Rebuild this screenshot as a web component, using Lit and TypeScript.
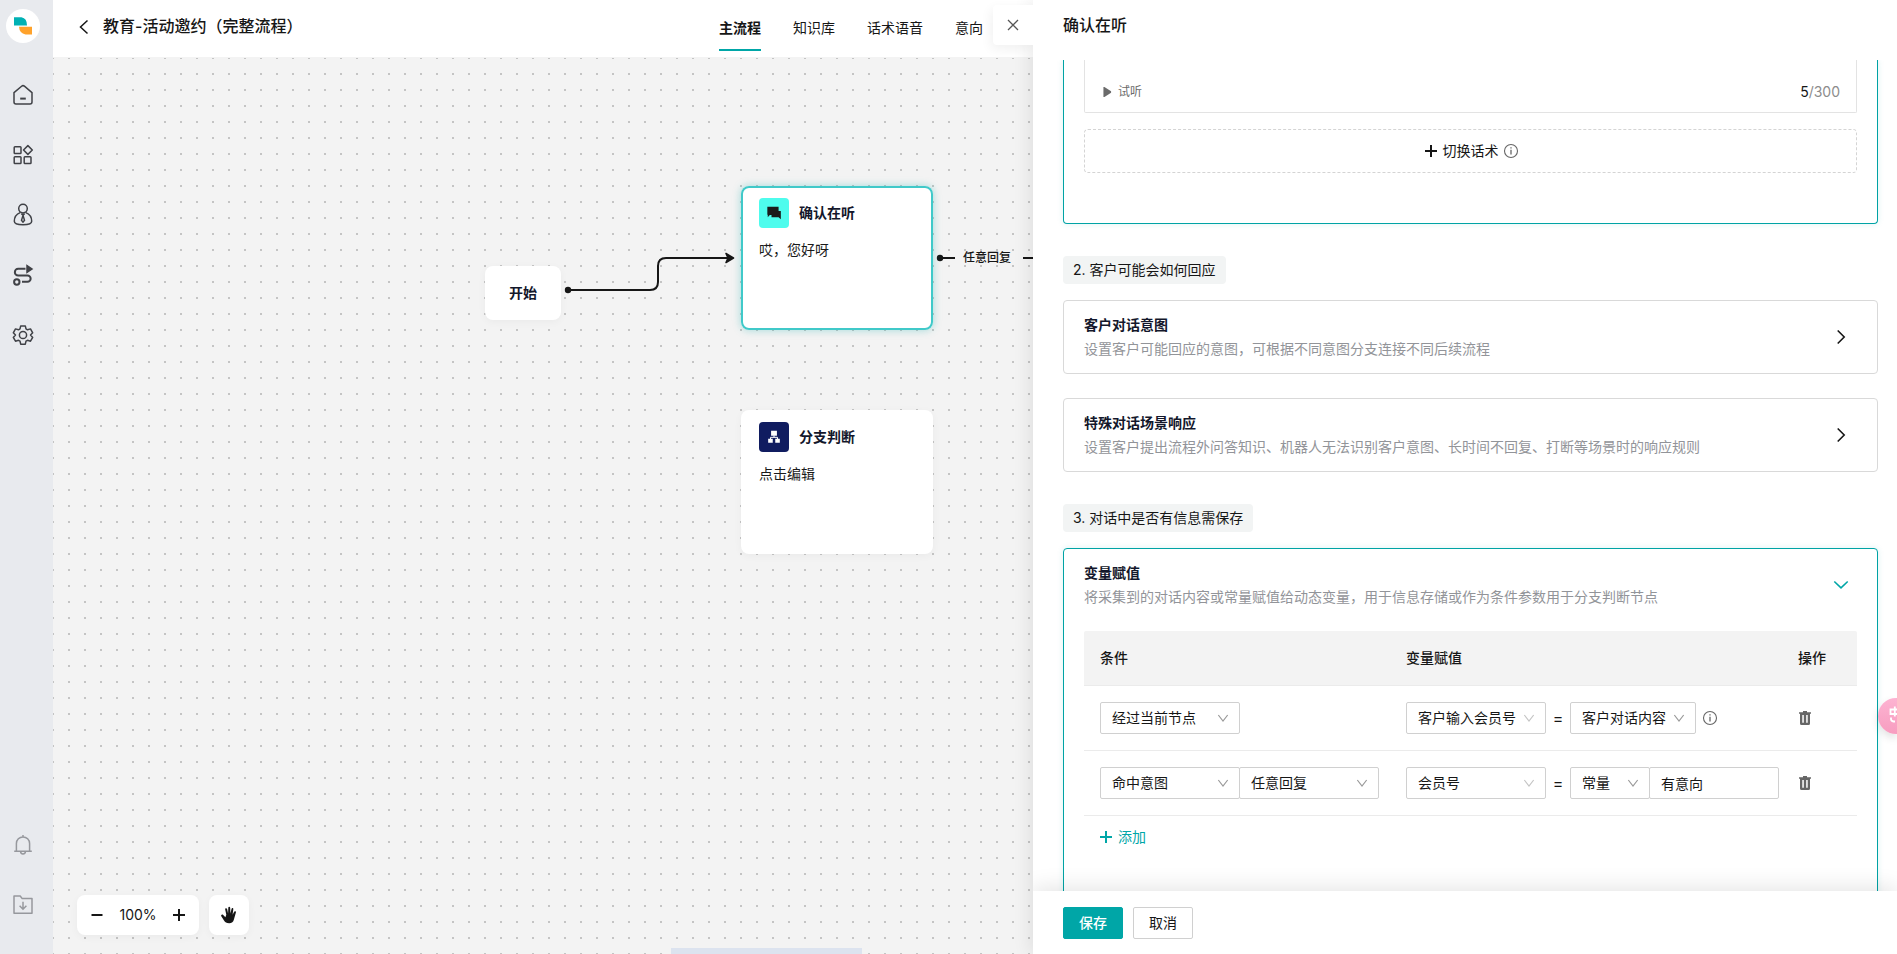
import { LitElement, html, css, svg, nothing } from "lit";
import { customElement, property } from "lit/decorators.js";

const icons: Record<string, unknown> = {
  home: svg`<path d="M3 9.600 10.600 3.200a2.200 2.200 0 0 1 2.800 0L21 9.600V19a2 2 0 0 1-2 2H5a2 2 0 0 1-2-2Z"/><path d="M9.200 15.600h5.600" stroke-width="2"/>`,
  apps: svg`<rect x="3.200" y="3.800" width="6.800" height="6.800" rx=".8"/><rect x="3.200" y="13.800" width="6.800" height="6.800" rx=".8"/><rect x="13.200" y="13.800" width="6.800" height="6.800" rx=".8"/><path d="m16.900 2.600 4.400 4.400-4.400 4.400-4.400-4.400Z" stroke-linejoin="round"/>`,
  person: svg`<circle cx="12" cy="5.600" r="4.300"/><path d="M9.200 9.600C5.600 11 3.300 14.500 3.300 18.300c0 2.700 3.700 3.500 8.700 3.500s8.700-.8 8.700-3.500c0-3.800-2.300-7.300-5.900-8.700"/><path d="m10.400 10.600 1.600 1.600 1.600-1.600M12 12.400l-1.500 5 1.500 1.700 1.500-1.700Z"/>`,
  route: svg`<circle cx="5.800" cy="19" r="2.700" stroke-width="2"/><path d="M14.500 5.800H7.200a3.200 3.200 0 0 0 0 6.700h9.300a3.100 3.100 0 0 1 0 6.300H11" stroke-width="2"/><path d="m16 2.600 5 3.400-5 3.400Z" fill="currentColor"/>`,
  gear: svg`<path d="M9.700 2.900h4.600l.7 3 1.500.9 3-.9 2.200 3.900-2.200 2.200 2.200 2.400-2.200 3.800-3-.9-1.500.9-.7 3H9.700l-.7-3-1.500-.9-3 .9-2.200-3.800L4.500 12 2.300 9.800l2.200-3.900 3 .9L9 5.900Z" stroke-linejoin="round"/><circle cx="12" cy="12" r="3.600"/>`,
  bell: svg`<path d="M5.400 18V10.500a6.600 6.600 0 0 1 13.200 0V18M3.200 18.200h17.600M12 2v2M9.600 18.500a2.400 2.400 0 0 0 4.800 0"/>`,
  folder: svg`<path d="M3 3h6.200l2 2.600H21V20.300H3Z" stroke-linejoin="round"/><path d="M12 8.800v7M8.600 12.800 12 16.200l3.400-3.400"/>`,
  back: svg`<path d="M15.500 5.500 8.500 12l7 6.500" stroke-width="1.500"/>`,
  close: svg`<path d="m7 7 10 10M17 7 7 17" stroke-width="1.300"/>`,
  right: svg`<path d="m8.700 5.500 6.500 6.500-6.500 6.500" stroke-width="1.600"/>`,
  down: svg`<path d="m5.300 8.500 6.700 6.300 6.700-6.300" stroke-width="1.600"/>`,
  caret: svg`<path d="m5 7.500 7 9 7-9" stroke-width="1.800"/>`,
  plus: svg`<path d="M12 6v12M6 12h12" stroke-width="2"/>`,
  minus: svg`<path d="M6.500 12h11" stroke-width="2"/>`,
  info: svg`<circle cx="12" cy="12" r="6.500" stroke-width="1.100"/><path d="M12 10.800v4.700M12 8.300v1.300" stroke-width="1.300"/>`,
  play: svg`<path d="M6.500 6v12h1.200l8-5v-2l-8-5Z" fill="currentColor" stroke="none"/>`,
  trash: svg`<path fill="currentColor" stroke="none" fill-rule="evenodd" d="M10 5h4v1.200h4v1.600h-1V17.500a1.500 1.500 0 0 1-1.500 1.500h-7A1.500 1.500 0 0 1 7 17.500V7.800H6V6.200h4ZM9.300 9v7.800h1.500V9Zm3.900 0v7.800h1.500V9Z"/>`,
  chat: svg`<path fill="currentColor" stroke="none" d="M4 4.500h13.500v5h2.700V19.500l-2.700-2.300H9V14.500H7L4.500 17V14H4Z"/>`,
  branch: svg`<path fill="currentColor" stroke="none" d="M8.500 4.500h7v6h-7ZM5 14h5.500v5H5ZM13.500 14H19v5h-5.500Z"/><path d="M7.800 15v-2.600h8.400V15M12 10v2.400" stroke-width="1.200"/>`,
  hand: svg`<path fill="currentColor" stroke="none" d="M9.300 11.800 8.200 6.500c-.3-1.500 1.500-1.900 1.900-.5l1 4.600.2-5.800c0-1.300 1.800-1.300 1.900 0l.2 5.800 1.100-4.700c.4-1.300 2-1 1.800.4l-.7 5.500 1.500-3c.6-1.200 2.200-.6 1.800.7l-2 7c-.7 2.500-2 3.700-4.700 3.700-2.800 0-4-1-5.200-2.800l-2.700-4.200c-.7-1.200.9-2.200 1.900-1.200l2.200 2.200Z"/>`,
};

@customElement("ui-icon")
class UiIcon extends LitElement {
  @property() name = "";
  static styles = css`
    :host { display: inline-flex; width: 24px; height: 24px; flex: none; }
    svg { width: 100%; height: 100%; fill: none; stroke: currentColor; stroke-width: 1.500; }
  `;
  render() {
    return html`<svg viewBox="0 0 24 24" aria-hidden="true">${icons[this.name]}</svg>`;
  }
}

const controls = css`
  * { box-sizing: border-box; }
  button, select, input { font: inherit; color: inherit; margin: 0; }
  button { background: none; border: 0; padding: 0; cursor: pointer; }
  h1, h2, h3, p { margin: 0; font-size: inherit; }
  a { color: inherit; text-decoration: none; }
`;

@customElement("app-sidebar")
class AppSidebar extends LitElement {
  static styles = [controls, css`
    :host { display: flex; flex-direction: column; align-items: center; width: 53px; flex: none;
      padding: 9px 7px 37px 0; background: #e8eaee; color: #404247; }
    .logo { width: 34px; height: 34px; border-radius: 50%; background: #fff; margin-bottom: 40px; }
    nav { display: flex; flex-direction: column; gap: 36px; }
    nav a { display: flex; }
    .bottom { margin-top: auto; color: #96989d; }
  `];
  render() {
    const link = (name: string, label: string) =>
      html`<a href="#${name}" aria-label=${label}><ui-icon name=${name}></ui-icon></a>`;
    return html`
      <svg class="logo" viewBox="0 0 34 34" aria-hidden="true">
        <path d="M8 8.300h7.500q5.500 1 5.500 8.200H8Z" fill="#00b1b4"/>
        <path d="M13 17.800h13v7.700h-6.500q-6-1-6.500-7.700Z" fill="#ffa22b"/>
      </svg>
      <nav>
        ${link("home", "首页")}${link("apps", "应用")}${link("person", "客户")}${link("route", "流程")}${link("gear", "设置")}
      </nav>
      <nav class="bottom">${link("bell", "通知")}${link("folder", "下载")}</nav>`;
  }
}

@customElement("flow-canvas")
class FlowCanvas extends LitElement {
  static styles = [controls, css`
    :host { display: block; position: relative; flex: 1; overflow: hidden; border-top: 1px solid #f3f3f3;
      background: #f3f3f3; }
    .grid { position: absolute; inset: 0; width: 100%; height: 100%; }
    .node { position: absolute; width: 192px; height: 144px; padding: 12px 18px; border-radius: 8px;
      background: #fff; box-shadow: 0 2px 8px rgba(0, 0, 0, 0.04); color: #1a1a1a; }
    .node.selected { box-shadow: inset 0 0 0 2px #40c9c9, 0 0 8px rgba(0, 166, 167, 0.35); }
    .node.start { width: 76px; height: 54px; padding: 0; display: grid; place-items: center;
      font-weight: 600; color: #13172b; }
    .head { display: flex; align-items: center; gap: 10px; }
    .head h2 { color: #13172b; font-weight: 600; }
    .tile { display: grid; place-items: center; width: 30px; height: 30px; border-radius: 4px; background: #4efced; }
    .tile.dark { background: #101c60; color: #fff; }
    .tile ui-icon { width: 20px; height: 20px; }
    .node p { margin-top: 11px; line-height: 22px; }
    .edge-label { position: absolute; font-size: 12px; line-height: 20px; font-weight: 500; }
    .tools { position: absolute; left: 24px; bottom: 19px; display: flex; gap: 10px; }
    .tools > * { display: flex; align-items: center; justify-content: center; height: 40px; border-radius: 8px;
      background: #fff; box-shadow: 0 2px 8px rgba(0, 0, 0, 0.04); }
    .zoom { width: 122px; gap: 10px; }
    .zoom button { display: flex; }
    .zoom output { width: 38px; text-align: center; }
    .hand { width: 40px; }
    .scroll { position: absolute; left: 618px; bottom: 0; width: 191px; height: 6px; background: #dce3ef; }
  `];
  render() {
    const nodes = [
      { x: 688, y: 128, icon: "chat", title: "确认在听", text: "哎，您好呀", selected: true },
      { x: 688, y: 352, icon: "branch", title: "分支判断", text: "点击编辑", selected: false },
    ];
    return html`
      <svg class="grid" aria-hidden="true">
        <defs><pattern id="dots" x="-1" y="-1" width="16" height="16" patternUnits="userSpaceOnUse">
          <rect width="2" height="2" fill="#c4c4c4"/></pattern></defs>
        <rect width="100%" height="100%" fill="url(#dots)"/>
        <g fill="none" stroke="#161616" stroke-width="2">
          <path d="M515 232h82q8 0 8-8v-16q0-8 8-8h64"/>
          <path d="M888 200h14M970 200h40"/>
        </g>
        <g fill="#161616">
          <circle cx="515" cy="232" r="3.200"/><circle cx="887" cy="200" r="3.200"/>
          <path d="m673 195.500 7.500 4.500-7.500 4.500 2-4.500Z" stroke="#161616" stroke-width="1.500" stroke-linejoin="round"/>
        </g>
      </svg>
      <div class="node start" style="left:432px;top:208px">开始</div>
      ${nodes.map((n) => html`
        <article class="node ${n.selected ? "selected" : ""}" style="left:${n.x}px;top:${n.y}px">
          <div class="head">
            <span class="tile ${n.selected ? "" : "dark"}"><ui-icon name=${n.icon}></ui-icon></span>
            <h2>${n.title}</h2>
          </div>
          <p>${n.text}</p>
        </article>`)}
      <span class="edge-label" style="left:910px;top:190px">任意回复</span>
      <div class="tools">
        <div class="zoom">
          <button aria-label="缩小"><ui-icon name="minus"></ui-icon></button>
          <output>100%</output>
          <button aria-label="放大"><ui-icon name="plus"></ui-icon></button>
        </div>
        <button class="hand" aria-label="拖动画布"><ui-icon name="hand"></ui-icon></button>
      </div>
      <div class="scroll"></div>`;
  }
}

@customElement("config-card")
class ConfigCard extends LitElement {
  @property() heading = "";
  @property() note = "";
  @property({ type: Boolean, reflect: true }) open = false;
  static styles = [controls, css`
    :host { display: block; border: 1px solid #d9d9d9; border-radius: 4px; background: #fff; }
    :host([open]) { border-color: #00a3a5; box-shadow: 0 0 6px rgba(0, 166, 167, 0.14); padding-bottom: 90px; }
    .toggle { display: flex; align-items: center; justify-content: space-between; width: 100%;
      padding: 12px 24px 12px 20px; text-align: left; line-height: 24px; }
    .title { display: block; color: #13172b; font-weight: 600; }
    .note { display: block; color: #929499; }
    :host([open]) ui-icon { color: #00a6a7; }
  `];
  render() {
    return html`
      <button class="toggle" aria-expanded=${this.open}>
        <span><span class="title">${this.heading}</span><span class="note">${this.note}</span></span>
        <ui-icon name=${this.open ? "down" : "right"}></ui-icon>
      </button>
      ${this.open ? html`<slot></slot>` : nothing}`;
  }
}

@customElement("config-drawer")
class ConfigDrawer extends LitElement {
  static styles = [controls, css`
    :host { display: flex; flex-direction: column; position: relative; width: 864px; flex: none;
      background: #fff; box-shadow: -4px 0 16px rgba(0, 0, 0, 0.08); }
    .close { position: absolute; right: 100%; top: 5px; width: 40px; height: 40px; display: grid; place-items: center;
      background: #fff; border-radius: 4px 0 0 4px; box-shadow: -2px 4px 12px rgba(0, 0, 0, 0.06);
      color: #555; clip-path: inset(-20px 0 -20px -20px); }
    .title { padding: 13px 30px 23px; font-size: 16px; line-height: 24px; font-weight: 500; }
    .body { flex: 1; min-height: 0; overflow: hidden; padding: 0 19px 0 30px; }
    .speech { border: 1px solid #00a3a5; border-top: 0; border-radius: 0 0 4px 4px; padding: 0 20px 50px;
      box-shadow: 0 0 6px rgba(0, 166, 167, 0.14); }
    .script { display: flex; align-items: flex-end; justify-content: space-between; height: 53px; padding: 0 16px 9px;
      border: 1px solid #e3e3e3; border-top: 0; border-radius: 0 0 2px 2px; line-height: 22px; }
    .listen { display: flex; align-items: center; font-size: 12px; line-height: 22px; color: #6b6b6b; }
    .listen ui-icon { width: 20px; height: 20px; margin-left: -3px; }
    .count { color: #8c8c8c; }
    .count b { font-weight: 400; color: #161616; }
    .switch { display: flex; align-items: center; justify-content: center; width: 100%; height: 44px; margin-top: 16px;
      border: 1px dashed #d4d4d4; border-radius: 4px; }
    .info { color: #666; }
    .step { display: table; margin: 32px 0 16px; padding: 0 10px; border-radius: 4px; background: #f2f4f4;
      line-height: 28px; font-weight: 400; }
    config-card + config-card { margin-top: 24px; }
    .assign { padding: 10px 20px 0; }
    table { width: 100%; table-layout: fixed; border-collapse: separate; border-spacing: 0; }
    th, td { padding: 16px 0 16px 16px; border-bottom: 1px solid #ebebeb; text-align: left; }
    th { background: #f3f3f3; line-height: 22px; font-weight: 500; }
    th:first-child { border-top-left-radius: 2px; }
    th:last-child { border-top-right-radius: 2px; }
    .c-cond { width: 306px; }
    .c-op { width: 75px; }
    .row { display: flex; align-items: center; }
    .row .info { margin-left: 2px; }
    .pick { display: inline-grid; grid-template-columns: 1fr; align-items: center; }
    .pick > * { grid-area: 1 / 1; }
    .pick select { appearance: none; width: 100%; height: 32px; padding: 0 12px 0 11px; border: 1px solid #d0d0d0;
      border-radius: 2px; background: #fff; text-overflow: clip; }
    .pick ui-icon { width: 16px; height: 16px; justify-self: end; margin-right: 9px; color: #999; pointer-events: none; }
    .pick.soft ui-icon { color: #c4c4c4; }
    .w140 { width: 140px; }
    .w126 { width: 126px; }
    .w80 { width: 80px; }
    .joined { margin-left: -1px; }
    .text { width: 130px; height: 32px; padding: 0 11px; border: 1px solid #d0d0d0; border-radius: 2px; background: #fff; }
    .eq { width: 24px; text-align: center; font-size: 16px; }
    .del { display: flex; color: #666; margin-left: -5px; }
    .add { display: flex; align-items: center; padding: 9px 0 0 10px; line-height: 22px; color: #00a6a7; }
    footer { display: flex; gap: 10px; position: relative; padding: 16px 30px 15px; background: #fff;
      box-shadow: 0 -4px 20px rgba(0, 0, 0, 0.1); clip-path: inset(-30px 0 0 0); }
    footer button { width: 60px; height: 32px; border: 1px solid #d0d0d0; border-radius: 2px; }
    footer .primary { background: #00a6a7; border-color: #00a6a7; color: #fff; font-weight: 500; }
    .helper { position: absolute; top: 698px; right: 0; width: 19px; height: 36px;
      border-radius: 18px 0 0 18px; background: linear-gradient(#fdb3d2, #f79dc0); box-shadow: 0 4px 8px rgba(0, 0, 0, 0.12); }
    .helper svg { display: block; width: 19px; height: 36px; fill: none; stroke: #fff; stroke-width: 1.800; }
  `];

  pick(label: string, value: string, size: string) {
    return html`<span class="pick ${size}">
      <select aria-label=${label}><option>${value}</option></select>
      <ui-icon name="caret"></ui-icon></span>`;
  }

  render() {
    const del = html`<button class="del" aria-label="删除"><ui-icon name="trash"></ui-icon></button>`;
    return html`
      <button class="close" aria-label="关闭"><ui-icon name="close"></ui-icon></button>
      <h1 class="title">确认在听</h1>
      <div class="body">
        <section class="speech">
          <div class="script">
            <button class="listen"><ui-icon name="play"></ui-icon>试听</button>
            <span class="count"><b>5</b>/300</span>
          </div>
          <button class="switch"><ui-icon name="plus"></ui-icon>切换话术<ui-icon class="info" name="info"></ui-icon></button>
        </section>
        <h2 class="step">2. 客户可能会如何回应</h2>
        <config-card heading="客户对话意图" note="设置客户可能回应的意图，可根据不同意图分支连接不同后续流程"></config-card>
        <config-card heading="特殊对话场景响应" note="设置客户提出流程外问答知识、机器人无法识别客户意图、长时间不回复、打断等场景时的响应规则"></config-card>
        <h2 class="step">3. 对话中是否有信息需保存</h2>
        <config-card open heading="变量赋值" note="将采集到的对话内容或常量赋值给动态变量，用于信息存储或作为条件参数用于分支判断节点">
          <div class="assign">
            <table>
              <colgroup><col class="c-cond"><col><col class="c-op"></colgroup>
              <thead><tr><th>条件</th><th>变量赋值</th><th>操作</th></tr></thead>
              <tbody>
                <tr>
                  <td><div class="row">${this.pick("条件", "经过当前节点", "w140")}</div></td>
                  <td><div class="row">${this.pick("变量", "客户输入会员号", "w140 soft")}<span class="eq">=</span>${this.pick("取值", "客户对话内容", "w126")}<ui-icon class="info" name="info"></ui-icon></div></td>
                  <td>${del}</td>
                </tr>
                <tr>
                  <td><div class="row">${this.pick("条件", "命中意图", "w140")}${this.pick("意图", "任意回复", "w140 joined")}</div></td>
                  <td><div class="row">${this.pick("变量", "会员号", "w140 soft")}<span class="eq">=</span>${this.pick("取值", "常量", "w80")}<input class="text joined" aria-label="常量" .value=${"有意向"}></div></td>
                  <td>${del}</td>
                </tr>
              </tbody>
            </table>
            <button class="add"><ui-icon name="plus"></ui-icon>添加</button>
          </div>
        </config-card>
      </div>
      <footer><button class="primary">保存</button><button>取消</button></footer>
      <button class="helper" aria-label="翻译助手">
        <svg viewBox="0 0 19 36" aria-hidden="true"><path d="M19 11.500h-6.500v4.500H19M16.800 8.500v10M13 19.500v1.500q0 2 2.500 2.500H17"/></svg>
      </button>`;
  }
}

@customElement("app-root")
class AppRoot extends LitElement {
  static styles = [controls, css`
    :host { display: flex; height: 100vh; overflow: hidden; color: #161616; background: #fff;
      font: 14px/22px Inter, "Noto Sans CJK SC", sans-serif; }
    main { display: flex; flex-direction: column; flex: 1; min-width: 0; }
    header { display: flex; align-items: center; height: 57px; padding: 0 50px 0 19px; white-space: nowrap; }
    .back { display: flex; margin-right: 7px; padding-bottom: 4px; }
    h1 { font-size: 16px; line-height: 24px; font-weight: 500; padding-bottom: 5px; }
    nav { display: flex; gap: 32px; margin-left: auto; align-self: flex-end; padding-bottom: 6px; }
    nav a { padding: 10px 0; border-bottom: 2px solid transparent; line-height: 22px; }
    nav a.active { border-color: #00a6a7; font-weight: 600; }
  `];
  render() {
    return html`
      <app-sidebar></app-sidebar>
      <main>
        <header>
          <button class="back" aria-label="返回"><ui-icon name="back"></ui-icon></button>
          <h1>教育-活动邀约（完整流程）</h1>
          <nav>
            <a class="active" href="#main">主流程</a>
            <a href="#kb">知识库</a>
            <a href="#voice">话术语音</a>
            <a href="#intent">意向</a>
          </nav>
        </header>
        <flow-canvas></flow-canvas>
      </main>
      <config-drawer></config-drawer>`;
  }
}
